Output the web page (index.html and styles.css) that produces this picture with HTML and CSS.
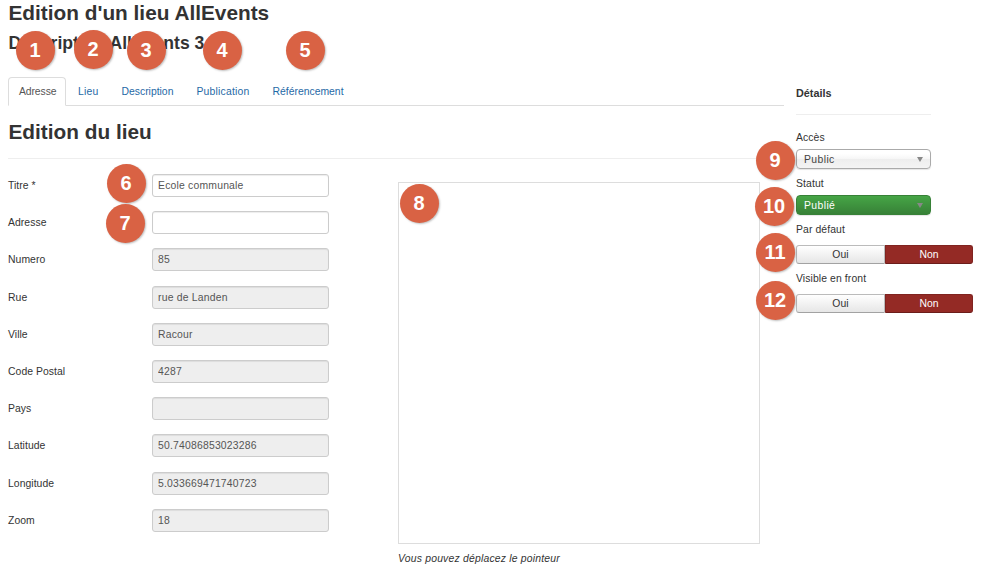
FILE: index.html
```html
<!DOCTYPE html>
<html lang="fr">
<head>
<meta charset="utf-8">
<title>Edition d'un lieu AllEvents</title>
<link rel="stylesheet" href="styles.css">
</head>
<body>
<div class="page">
  <header>
    <h1>Edition d'un lieu AllEvents</h1>
    <h2>Description AllEvents 3.</h2>
  </header>
  <div class="columns">
    <main>
      <nav class="tabs">
        <a class="tab active">Adresse</a>
        <a class="tab wide">Lieu</a>
        <a class="tab">Description</a>
        <a class="tab wide">Publication</a>
        <a class="tab">Référencement</a>
      </nav>
      <div class="pane">
        <h1 class="legend">Edition du lieu</h1>
        <div class="body">
          <form class="fields">
            <div class="row"><label>Titre *</label><input value="Ecole communale"></div>
            <div class="row"><label>Adresse</label><input value=""></div>
            <div class="row"><label>Numero</label><input readonly value="85"></div>
            <div class="row"><label>Rue</label><input readonly value="rue de Landen"></div>
            <div class="row"><label>Ville</label><input readonly value="Racour"></div>
            <div class="row"><label>Code Postal</label><input readonly value="4287"></div>
            <div class="row"><label>Pays</label><input readonly value=""></div>
            <div class="row"><label>Latitude</label><input readonly value="50.74086853023286"></div>
            <div class="row"><label>Longitude</label><input readonly value="5.033669471740723"></div>
            <div class="row"><label>Zoom</label><input readonly value="18"></div>
          </form>
          <div class="map-col">
            <div class="map"></div>
            <em class="hint">Vous pouvez déplacez le pointeur</em>
          </div>
        </div>
      </div>
    </main>
    <aside>
      <h4>Détails</h4>
      <hr>
      <label>Accès</label>
      <div class="select"><span>Public</span><i></i></div>
      <label>Statut</label>
      <div class="select green"><span>Publié</span><i></i></div>
      <label>Par défaut</label>
      <div class="switch"><span>Oui</span><span class="on">Non</span></div>
      <label>Visible en front</label>
      <div class="switch"><span>Oui</span><span class="on">Non</span></div>
    </aside>
  </div>
  <b class="badge n1">1</b>
  <b class="badge n2">2</b>
  <b class="badge n3">3</b>
  <b class="badge n4">4</b>
  <b class="badge n5">5</b>
  <b class="badge n6">6</b>
  <b class="badge n7">7</b>
  <b class="badge n8">8</b>
  <b class="badge n9">9</b>
  <b class="badge n10">10</b>
  <b class="badge n11">11</b>
  <b class="badge n12">12</b>
</div>
</body>
</html>
```
FILE: styles.css
```css
* { box-sizing: border-box; }
body {
  margin: 0;
  background: #fff;
  color: #333;
  font: 10.4px/14px "Liberation Sans", Arial, sans-serif;
  letter-spacing: 0.05px;
}
.page { position: relative; width: 989px; height: 572px; overflow: hidden; padding-left: 8px; }
header { height: 77px; }
h1, h2, h4 { margin: 0; letter-spacing: 0; }
h1 { font-size: 20.8px; line-height: 26px; text-indent: 0.5px; }
h2 { font-size: 17.6px; line-height: 22px; padding-top: 6px; text-indent: 0.5px; }
.columns { display: flex; gap: 12px; }
main { width: 776px; }

.tabs { display: flex; height: 29px; border-bottom: 1px solid #ddd; }
.tab {
  height: 29px;
  margin-right: 1px;
  padding: 7px 10px 0;
  border: 1px solid transparent;
  border-radius: 4px 4px 0 0;
  color: #1f69a6;
  letter-spacing: 0;
}
.tab.wide { letter-spacing: 0.2px; }
.tab.active { width: 58px; border-color: #ddd; border-bottom-color: #fff; background: #fff; color: #555; letter-spacing: -0.1px; }

.pane { width: 752px; }
.legend { height: 53px; padding-top: 13px; border-bottom: 1px solid #eee; }
.body { display: flex; padding-top: 15px; }
.fields { width: 390px; }
.row { display: flex; height: 37.2px; }
.row label { width: 144px; padding-top: 5px; }
input {
  width: 177px;
  height: 23px;
  padding: 0 5px;
  border: 1px solid #ccc;
  border-radius: 3px;
  box-shadow: inset 0 1px 1px rgba(0, 0, 0, .075);
  background: #fff;
  color: #555;
  font: inherit;
  letter-spacing: 0.2px;
}
input[readonly] { background: #eee; }
.map-col { padding-top: 8px; }
.map { width: 362px; height: 362px; border: 1px solid #ddd; }
.hint { display: block; margin-top: 8px; letter-spacing: 0.2px; }

aside { width: 177px; }
h4 { padding-top: 9px; font-size: 10.8px; line-height: 14px; }
hr { width: 135px; margin: 14px 0 16px; border: 0; border-top: 1px solid #eee; }
aside label { display: block; height: 14px; letter-spacing: 0.1px; }
.select {
  display: flex;
  justify-content: space-between;
  align-items: center;
  width: 135px;
  height: 20px;
  margin: 4px 0 8px;
  padding: 0 7px;
  border: 1px solid #aaa;
  border-radius: 4px;
  background: linear-gradient(#fff 20%, #f6f6f6 50%, #eee 52%, #f4f4f4);
  box-shadow: 0 1px 1px rgba(0, 0, 0, .1);
  color: #444;
  letter-spacing: 0.4px;
}
.select span { padding-top: 1px; }
.select i { border: 3px solid transparent; border-top: 5px solid #888; border-bottom: 0; }
.green { border-color: #378137; background: linear-gradient(#46a546, #378137); color: #fff; }
.switch { display: flex; width: 177px; height: 19px; margin: 8px 0; }
.switch span {
  width: 89px;
  border: 1px solid #bbb;
  border-bottom-color: #a2a2a2;
  border-radius: 3px 0 0 3px;
  background: linear-gradient(#fff, #e6e6e6);
  text-align: center;
  line-height: 18px;
}
.switch .on { width: 88px; border-color: #802420 #802420 #6b1d1a; border-radius: 0 3px 3px 0; background: #942a25; color: #fff; }

.badge {
  position: absolute;
  width: 39px;
  height: 39px;
  margin-left: -0.5px;
  border-radius: 50%;
  background: #d96244;
  box-shadow: 1px 1px 2px rgba(0, 0, 0, .25);
  color: #fff;
  font-size: 20px;
  line-height: 38px;
  letter-spacing: 0;
  text-align: center;
}
.n1 { left: 16px; top: 31px; }
.n2 { left: 74px; top: 30px; }
.n3 { left: 127px; top: 31px; }
.n4 { left: 203px; top: 31px; }
.n5 { left: 286px; top: 31px; }
.n6 { left: 107px; top: 164px; }
.n7 { left: 106px; top: 204px; }
.n8 { left: 400px; top: 184px; }
.n9 { left: 756px; top: 141px; }
.n10 { left: 755px; top: 187px; }
.n11 { left: 756px; top: 233px; }
.n12 { left: 756px; top: 281px; }
```
